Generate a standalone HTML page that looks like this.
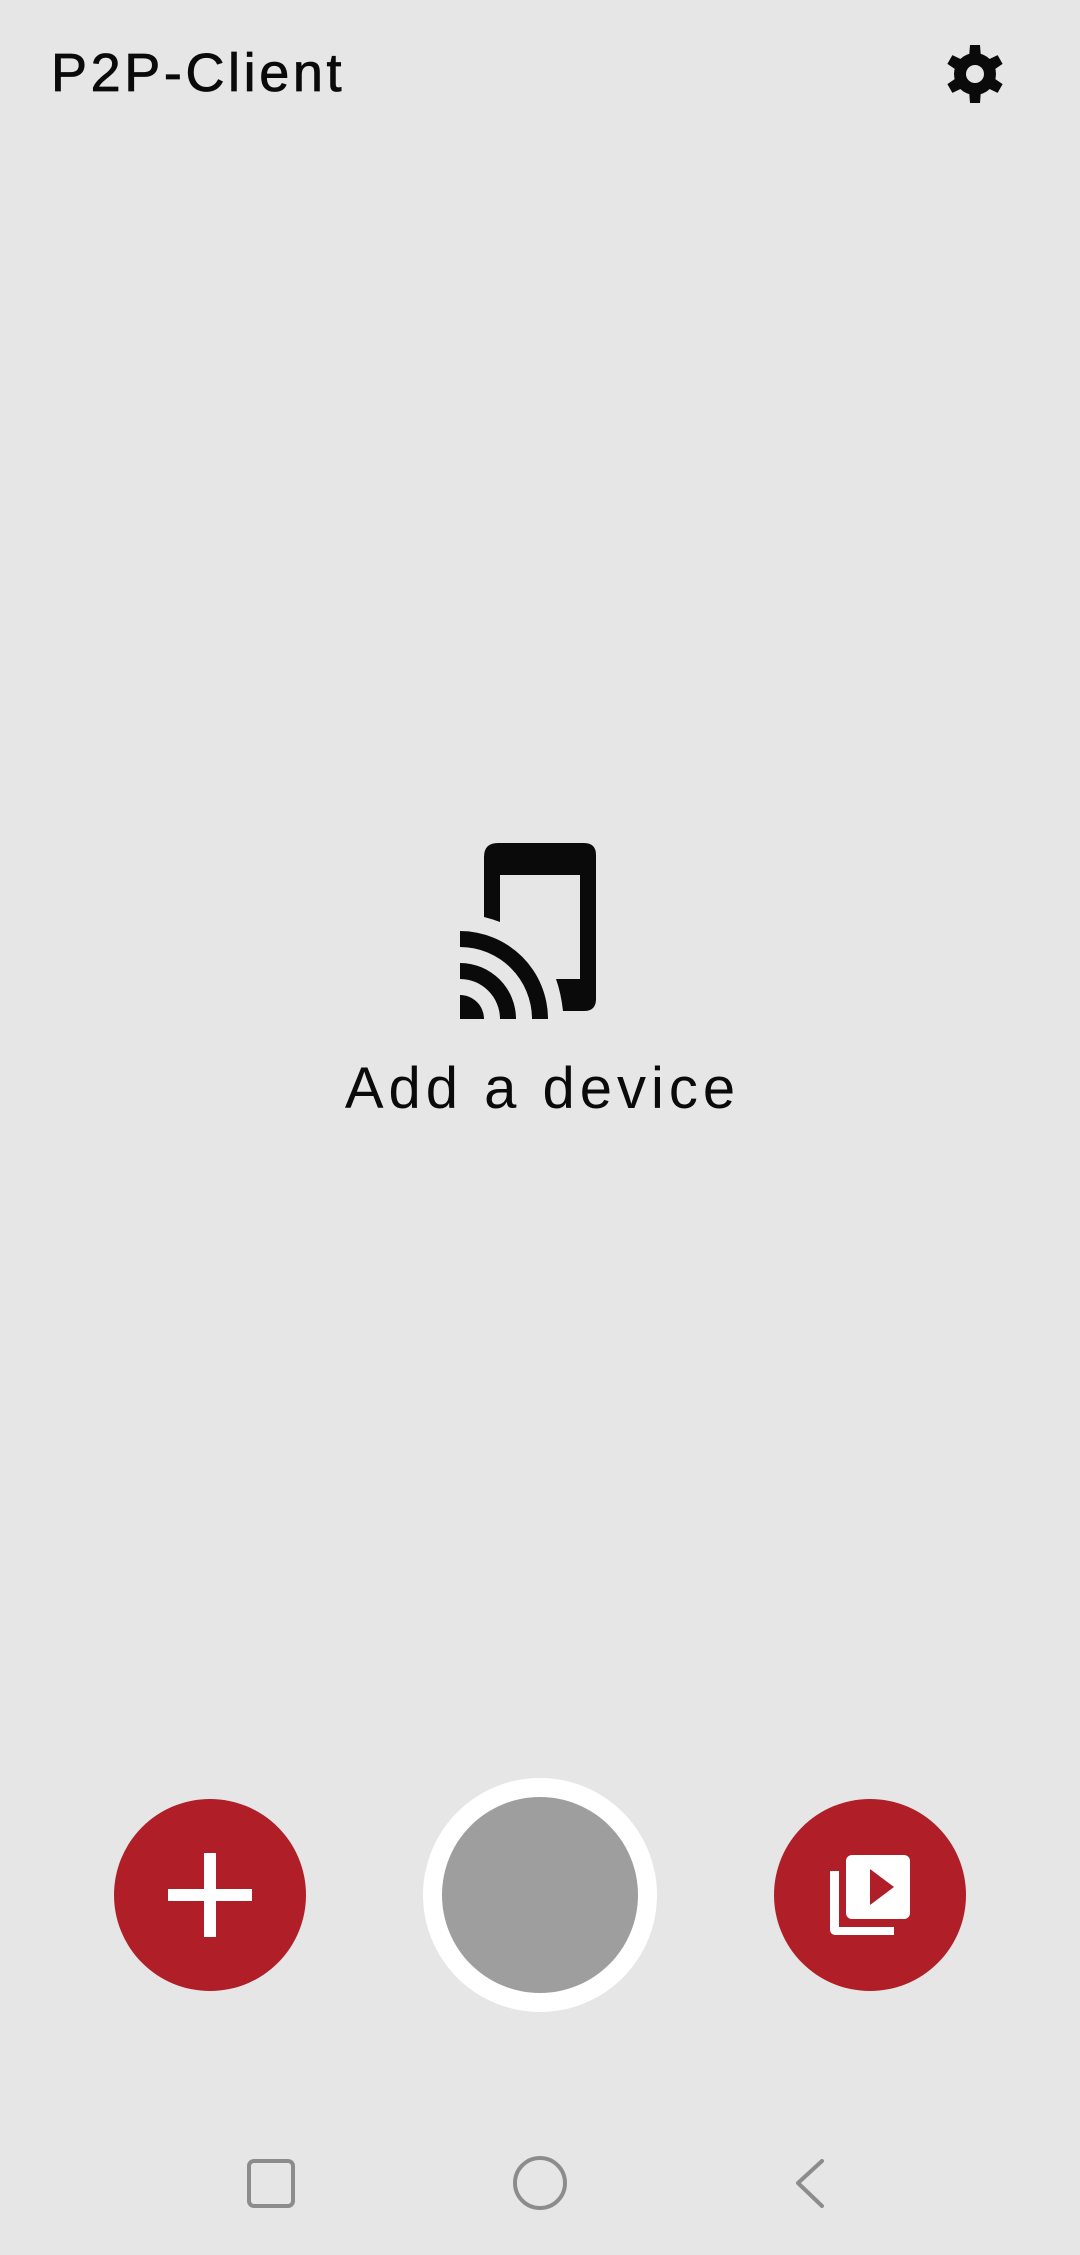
<!DOCTYPE html>
<html><head><meta charset="utf-8"><style>
html,body{margin:0;padding:0;background:#e6e6e6;}
body{width:1080px;height:2255px;position:relative;overflow:hidden;font-family:"Liberation Sans","DejaVu Sans",sans-serif;}
.t{position:absolute;left:51px;top:38px;font-size:54px;color:#0a0a0a;letter-spacing:3.6px;line-height:70px;white-space:nowrap;-webkit-text-stroke:0.8px #0a0a0a;}
.a{position:absolute;left:0;width:1080px;text-align:center;top:1054px;font-size:58px;line-height:70px;color:#0a0a0a;letter-spacing:5px;text-indent:5px;}
svg{position:absolute;left:0;top:0;}
</style></head><body>
<div class="t">P2P-Client</div>
<div class="a">Add a device</div>
<svg width="1080" height="2255" viewBox="0 0 1080 2255">
 <g transform="translate(975,74)" fill="#0a0a0a">
  <g id="gt">
   <path d="M-5 -29 H5 L6 -16 H-6 Z"/>
  </g>
  <use href="#gt" transform="rotate(60)"/><use href="#gt" transform="rotate(120)"/><use href="#gt" transform="rotate(180)"/><use href="#gt" transform="rotate(240)"/><use href="#gt" transform="rotate(300)"/>
  <circle r="21"/>
  <circle r="9" fill="#e6e6e6"/>
 </g>
 <path fill="#0a0a0a" fill-rule="evenodd" d="M498 843 H584 Q596 843 596 855 V999 Q596 1011 584 1011 H563 Q561 993 556 979 H580 V875 H500 V922 Q492 919 484 917 V857 Q484 843 498 843 Z"/>
 <path fill="#0a0a0a" d="M460 931 A88 88 0 0 1 548 1019 H532 A72 72 0 0 0 460 947 Z"/>
 <path fill="#0a0a0a" d="M460 963 A56 56 0 0 1 516 1019 H500 A40 40 0 0 0 460 979 Z"/>
 <path fill="#0a0a0a" d="M460 995 A24 24 0 0 1 484 1019 H460 Z"/>
 <circle cx="210" cy="1895" r="96" fill="#b01e28"/>
 <rect x="204" y="1853" width="12" height="84" fill="#fff"/>
 <rect x="168" y="1889" width="84" height="12" fill="#fff"/>
 <circle cx="540" cy="1895" r="117" fill="#fff"/>
 <circle cx="540" cy="1895" r="98" fill="#9e9e9e"/>
 <circle cx="870" cy="1895" r="96" fill="#b01e28"/>
 <rect x="846" y="1855" width="64" height="64" rx="6" fill="#fff"/>
 <path d="M870 1869 L894 1887 L870 1905 Z" fill="#b01e28"/>
 <path d="M830 1871 H839 V1927 H894 V1935 H836 Q830 1935 830 1929 Z" fill="#fff"/>
 <rect x="249" y="2161" width="44" height="45" rx="5" fill="none" stroke="#8c8c8c" stroke-width="4"/>
 <circle cx="540" cy="2183" r="25" fill="none" stroke="#8c8c8c" stroke-width="4"/>
 <path d="M822 2161 L798 2183 L822 2206" fill="none" stroke="#8c8c8c" stroke-width="4" stroke-linecap="round" stroke-linejoin="round"/>
</svg>
</body></html>
